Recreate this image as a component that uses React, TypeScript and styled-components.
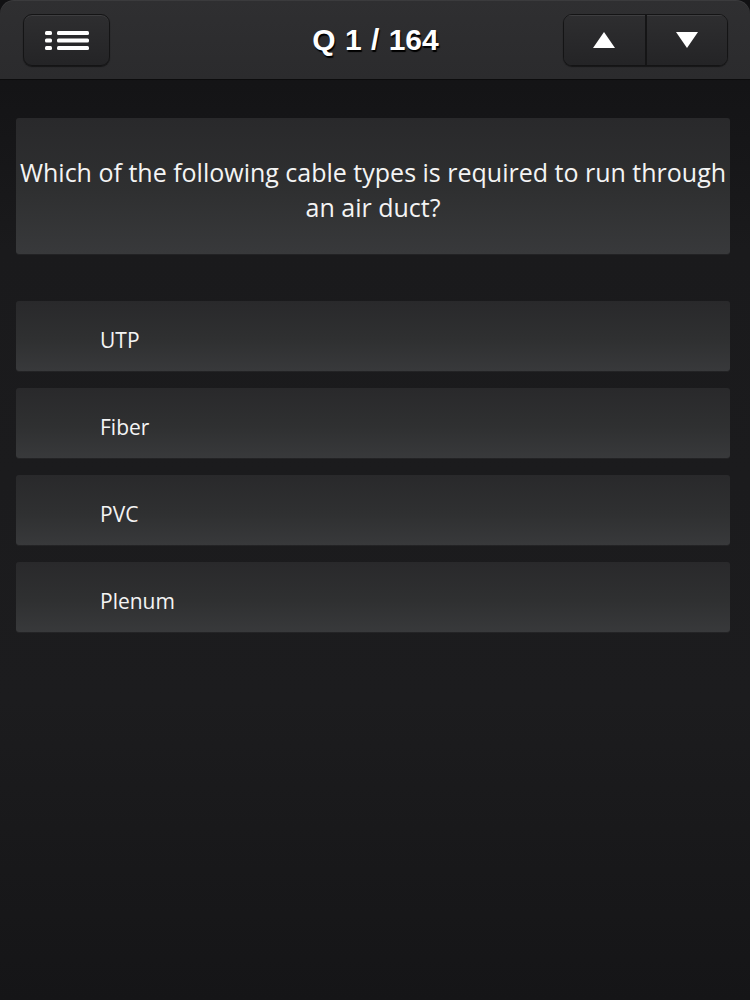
import styled, { createGlobalStyle, css } from 'styled-components';

const GlobalStyle = createGlobalStyle`
  html, body {
    margin: 0;
    padding: 0;
    background: #111113;
  }
  * {
    box-sizing: border-box;
  }
`;

const answers = ['UTP', 'Fiber', 'PVC', 'Plenum'];

const App = () => {
  return (
    <>
      <GlobalStyle />
      <S.Page>
        <S.Header>
          <S.ToolButton aria-label="menu">
            <svg width="44" height="24" viewBox="0 0 44 24">
              <g fill="#fff">
                <rect x="0" y="3" width="7" height="4" rx="1.5" />
                <rect x="0" y="10.5" width="7" height="4" rx="1.5" />
                <rect x="0" y="18" width="7" height="4" rx="1.5" />
                <rect x="12" y="3" width="32" height="4" rx="1.5" />
                <rect x="12" y="10.5" width="32" height="4" rx="1.5" />
                <rect x="12" y="18" width="32" height="4" rx="1.5" />
              </g>
            </svg>
          </S.ToolButton>
          <S.Title>Q 1 / 164</S.Title>
          <S.Segment>
            <S.SegButton side="left" aria-label="previous">
              <svg width="24" height="18" viewBox="0 0 24 18">
                <polygon points="12,1 23,17 1,17" fill="#fff" />
              </svg>
            </S.SegButton>
            <S.SegButton side="right" aria-label="next">
              <svg width="24" height="18" viewBox="0 0 24 18">
                <polygon points="1,1 23,1 12,17" fill="#fff" />
              </svg>
            </S.SegButton>
          </S.Segment>
        </S.Header>

        <S.Content>
          <S.Question>
            Which of the following cable types is required to run through an air duct?
          </S.Question>
          <S.Answers>
            {answers.map((answer) => (
              <S.Answer key={answer}>{answer}</S.Answer>
            ))}
          </S.Answers>
        </S.Content>
      </S.Page>
    </>
  );
};

const panel = css`
  background: linear-gradient(180deg, #29292b 0%, #2f3031 55%, #38393b 100%);
  border-radius: 3px;
  box-shadow: 0 1px 0 rgba(255, 255, 255, 0.04);
  color: #f4f4f4;
  font-family: 'Open Sans', 'Noto Sans', sans-serif;
`;

const S = {
  Page: styled.div`
    width: 750px;
    min-height: 1000px;
    display: flex;
    flex-direction: column;
    background: linear-gradient(180deg, #111113 0px, #1a1a1c 250px, #1c1c1e 700px, #151517 1000px);
  `,

  Header: styled.header`
    display: grid;
    grid-template-columns: 1fr auto 1fr;
    align-items: center;
    height: 79px;
    padding: 0 22px 0 23px;
    background: linear-gradient(180deg, #2f2f31 0%, #2b2b2d 100%);
    border-radius: 14px 14px 0 0;
    box-shadow: inset 0 1px 0 rgba(255, 255, 255, 0.06), 0 1px 0 #0c0c0d;
  `,

  ToolButton: styled.button`
    display: flex;
    align-items: center;
    justify-content: center;
    justify-self: start;
    width: 87px;
    height: 52px;
    padding: 0;
    border: 1px solid #141415;
    border-radius: 9px;
    background: linear-gradient(180deg, #2e2e30 0%, #242426 100%);
    box-shadow: inset 0 1px 0 rgba(255, 255, 255, 0.08), 0 1px 1px rgba(0, 0, 0, 0.5);
  `,

  Title: styled.h1`
    margin: 0;
    color: #fff;
    font-family: 'Liberation Sans', Arial, sans-serif;
    font-size: 30px;
    font-weight: 700;
    word-spacing: 1px;
    text-shadow: 1px 2px 1px #000;
  `,

  Segment: styled.div`
    display: flex;
    justify-self: end;
    width: 165px;
    height: 52px;
    border: 1px solid #141415;
    border-radius: 9px;
    overflow: hidden;
    box-shadow: 0 1px 1px rgba(0, 0, 0, 0.5);
  `,

  SegButton: styled.button<{ side: 'left' | 'right' }>`
    display: flex;
    flex: 1;
    align-items: center;
    justify-content: center;
    padding: 0;
    border: none;
    background: linear-gradient(180deg, #2e2e30 0%, #242426 100%);
    box-shadow: inset 0 1px 0 rgba(255, 255, 255, 0.08);
    ${({ side }) =>
      side === 'left' &&
      css`
        border-right: 2px solid #151516;
      `};
  `,

  Content: styled.main`
    display: flex;
    flex-direction: column;
    gap: 47px;
    padding: 39px 20px 0 16px;
  `,

  Question: styled.div`
    ${panel};
    display: flex;
    align-items: center;
    justify-content: center;
    height: 136px;
    padding: 8px 0 0;
    font-size: 25px;
    line-height: 35px;
    font-weight: 500;
    text-align: center;
  `,

  Answers: styled.div`
    display: flex;
    flex-direction: column;
    gap: 17px;
  `,

  Answer: styled.div`
    ${panel};
    display: flex;
    align-items: center;
    height: 70px;
    padding: 8px 0 0 84px;
    font-size: 21px;
  `,
};

export default App;
